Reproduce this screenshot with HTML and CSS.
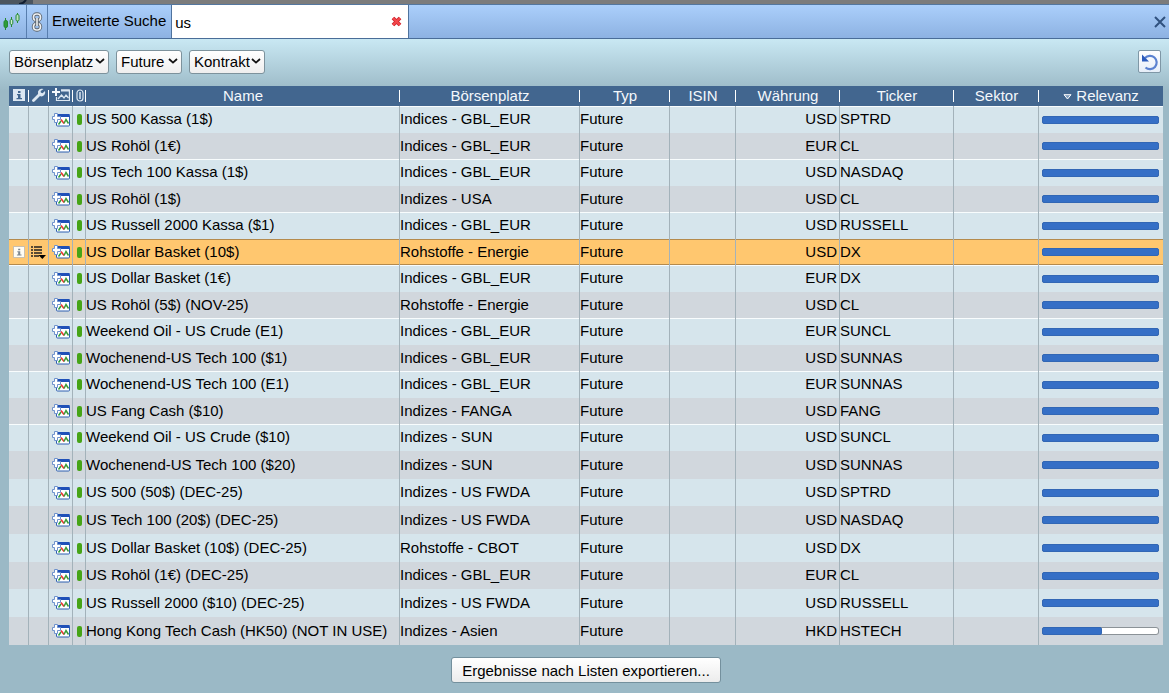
FILE: index.html
```
<!DOCTYPE html>
<html lang="de">
<head>
  <meta charset="UTF-8">
  <meta name="viewport" content="width=device-width, initial-scale=1.0">
  <title>Erweiterte Suche</title>
  <link rel="stylesheet" href="styles.css">
</head>
<body>
  <svg class="sprite" aria-hidden="true">
    <symbol id="icon-chevron" viewBox="0 0 10 6">
      <path d="M1 1l4 3.6L9 1" fill="none" stroke="#111" stroke-width="1.8"/>
    </symbol>
    <symbol id="icon-chart" viewBox="0 0 18 14">
      <rect x="4.500" y="1.500" width="13" height="11.500" rx="1" fill="#fff" stroke="#2d5fb0"/>
      <path d="M5 1h12.500v3H5z" fill="#1f50b8"/>
      <path d="M6.500 11.500L9 8" stroke="#2f9e3a" stroke-width="1.500"/>
      <path d="M9 6.500l3 4" stroke="#e33" stroke-width="1.500"/>
      <path d="M12 10.500l2-4 2.500 4" fill="none" stroke="#3c9a35" stroke-width="1.500"/>
      <path d="M2.500.500h3v3h3v3h-3v3h-3v-3h-2v-3h2z" fill="#fff" stroke="#6f92cc"/>
    </symbol>
    <symbol id="icon-chart-light" viewBox="0 0 18 14">
      <path d="M9 2h8.400v10.500H4.500V9" fill="none" stroke="#dce7f2" stroke-width="1.200"/>
      <path d="M9 1.500h8.500v2H9z" fill="#dce7f2"/>
      <path d="M6 11l3.500-4 2.500 3 2-3 2.500 3" fill="none" stroke="#dce7f2" stroke-width="1.300"/>
      <path d="M3 0h2v3h3v2H5v3H3V5H0V3h3z" fill="#f4f8fc"/>
    </symbol>
    <symbol id="icon-info" viewBox="0 0 12 12">
      <path d="M5 2h2.500v2H5zM4 5h3.500v4H9v1.300H3.500V9H5V6.200H4z"/>
    </symbol>
    <symbol id="icon-list" viewBox="0 0 15 13">
      <path d="M0 1h2M0 4h2M0 7h2M0 10h2M3 1h8M3 4h8M3 7h8M3 10h5" stroke="#222" stroke-width="1.500"/>
      <path d="M7.500 9H15l-3.700 4z" fill="#000"/>
    </symbol>
  </svg>

  <div class="backdrop">
    <svg width="33" height="4" viewBox="0 0 33 4" aria-hidden="true">
      <path d="M0 0h33v4H0z" fill="#4c5660"/>
      <path d="M19 4q4 0 7-4" fill="none" stroke="#111e30" stroke-width="2"/>
    </svg>
  </div>

  <header class="search-bar">
    <button class="bar-button candles" aria-label="Chart">
      <svg width="17" height="20" viewBox="0 0 17 20">
        <g stroke="#258a32" fill="#2f9c3b">
          <path d="M2.500 6v12M8.500 5v10M14.500 1v10"/>
          <rect x="1" y="8.500" width="3.500" height="7" rx="1.500"/>
          <rect x="7.200" y="7.500" width="2.600" height="5" rx="1.200" fill="#d0ecd4"/>
          <rect x="13" y="2.500" width="3" height="6.500" rx="1.300" fill="#b9e0c0"/>
        </g>
      </svg>
    </button>
    <button class="bar-button link" aria-label="Verknüpfung">
      <svg width="12" height="20" viewBox="0 0 12 20" fill="none">
        <g stroke="#5f6770" stroke-width="3.400">
          <rect x="2.500" y="2" width="7" height="6.500" rx="3"/>
          <rect x="2.500" y="11.500" width="7" height="6.500" rx="3"/>
        </g>
        <g stroke="#edf0f2" stroke-width="1.600">
          <rect x="2.500" y="2" width="7" height="6.500" rx="3"/>
          <rect x="2.500" y="11.500" width="7" height="6.500" rx="3"/>
        </g>
        <path d="M6 6v8" stroke="#5f6770" stroke-width="3.600"/>
        <path d="M6 6v8" stroke="#edf0f2" stroke-width="1.600"/>
      </svg>
    </button>
    <label class="search-label" for="search">Erweiterte Suche</label>
    <div class="search-field">
      <input type="text" id="search" value="us" autocomplete="off" autofocus>
      <button class="clear" aria-label="Suche leeren">
        <svg width="11" height="11" viewBox="0 0 11 11">
          <path d="M2 2l7 7M9 2l-7 7" stroke="#c9252d" stroke-width="3.800"/>
          <path d="M2 2l7 7M9 2l-7 7" stroke="#f4464b" stroke-width="2.200"/>
        </svg>
      </button>
    </div>
    <button class="close" aria-label="Schließen">
      <svg width="12" height="12" viewBox="0 0 12 12">
        <path d="M1 1l10 10M11 1L1 11" stroke="#31527f" stroke-width="2"/>
      </svg>
    </button>
  </header>

  <main>
    <div class="filters">
      <div class="select">
        <select aria-label="Börsenplatz"><option>Börsenplatz</option></select>
        <svg width="10" height="6"><use href="#icon-chevron"/></svg>
      </div>
      <div class="select">
        <select class="wide" aria-label="Typ"><option>Future</option></select>
        <svg width="10" height="6"><use href="#icon-chevron"/></svg>
      </div>
      <div class="select">
        <select aria-label="Kontrakt"><option>Kontrakt</option></select>
        <svg width="10" height="6"><use href="#icon-chevron"/></svg>
      </div>
      <button class="reset" aria-label="Zurücksetzen">
        <svg width="18" height="18" viewBox="0 0 18 18">
          <path d="M4 5A6.700 6.700 0 1 1 4.500 14.500" fill="none" stroke="#5b82d0" stroke-width="2.200"/>
          <path d="M1 1.500v7h7z" fill="#2c5cbc"/>
        </svg>
      </button>
    </div>

    <table class="results">
      <colgroup>
        <col class="col-icon"><col class="col-icon"><col class="col-chart"><col class="col-status">
        <col class="col-name"><col class="col-market"><col class="col-type"><col class="col-isin">
        <col class="col-currency"><col class="col-ticker"><col class="col-sector"><col class="col-relevance">
      </colgroup>
      <thead>
        <tr>
          <th aria-label="Info"><svg class="info-head" width="12" height="12"><use href="#icon-info"/></svg></th>
          <th aria-label="Aktionen">
            <svg width="14" height="14" viewBox="0 0 14 14">
              <path d="M1.500 12.500L8 6" stroke="#dce7f2" stroke-width="2.800" stroke-linecap="round"/>
              <path d="M11.500 1A4 4 0 0 0 6 5.500 3.600 3.600 0 0 0 8.500 8.300 4 4 0 0 0 13 3l-2.500 2.300L8.700 4.600V3z" fill="#dce7f2"/>
            </svg>
          </th>
          <th aria-label="Chart"><svg width="18" height="14"><use href="#icon-chart-light"/></svg></th>
          <th aria-label="Status">
            <svg width="8" height="13" viewBox="0 0 8 13">
              <rect x="1" y="1" width="6" height="11" rx="3" fill="none" stroke="#dce7f2" stroke-width="1.200"/>
              <path d="M4 3v7" stroke="#dce7f2" stroke-width="1.500"/>
            </svg>
          </th>
          <th>Name</th>
          <th>Börsenplatz</th>
          <th>Typ</th>
          <th>ISIN</th>
          <th>Währung</th>
          <th>Ticker</th>
          <th>Sektor</th>
          <th aria-sort="descending">
            <svg class="sort" width="9" height="6" viewBox="0 0 9 6"><path d="M1 .700h7L4.500 5z" fill="#7f9cbd" stroke="#fff"/></svg>
            Relevanz
          </th>
        </tr>
      </thead>
      <tbody id="rows"></tbody>
    </table>

    <div class="footer">
      <button class="export">Ergebnisse nach Listen exportieren...</button>
    </div>
  </main>

  <script>
    // name, market, currency, ticker, relevance in percent
    const results = [
      ['US 500 Kassa (1$)', 'Indices - GBL_EUR', 'USD', 'SPTRD', 100],
      ['US Rohöl (1€)', 'Indices - GBL_EUR', 'EUR', 'CL', 100],
      ['US Tech 100 Kassa (1$)', 'Indices - GBL_EUR', 'USD', 'NASDAQ', 100],
      ['US Rohöl (1$)', 'Indizes - USA', 'USD', 'CL', 100],
      ['US Russell 2000 Kassa ($1)', 'Indices - GBL_EUR', 'USD', 'RUSSELL', 100],
      ['US Dollar Basket (10$)', 'Rohstoffe - Energie', 'USD', 'DX', 100],
      ['US Dollar Basket (1€)', 'Indices - GBL_EUR', 'EUR', 'DX', 100],
      ['US Rohöl (5$) (NOV-25)', 'Rohstoffe - Energie', 'USD', 'CL', 100],
      ['Weekend Oil - US Crude (E1)', 'Indices - GBL_EUR', 'EUR', 'SUNCL', 100],
      ['Wochenend-US Tech 100 ($1)', 'Indices - GBL_EUR', 'USD', 'SUNNAS', 100],
      ['Wochenend-US Tech 100 (E1)', 'Indices - GBL_EUR', 'EUR', 'SUNNAS', 100],
      ['US Fang Cash ($10)', 'Indizes - FANGA', 'USD', 'FANG', 100],
      ['Weekend Oil - US Crude ($10)', 'Indizes - SUN', 'USD', 'SUNCL', 100],
      ['Wochenend-US Tech 100 ($20)', 'Indizes - SUN', 'USD', 'SUNNAS', 100],
      ['US 500 (50$) (DEC-25)', 'Indizes - US FWDA', 'USD', 'SPTRD', 100],
      ['US Tech 100 (20$) (DEC-25)', 'Indizes - US FWDA', 'USD', 'NASDAQ', 100],
      ['US Dollar Basket (10$) (DEC-25)', 'Rohstoffe - CBOT', 'USD', 'DX', 100],
      ['US Rohöl (1€) (DEC-25)', 'Indices - GBL_EUR', 'EUR', 'CL', 100],
      ['US Russell 2000 ($10) (DEC-25)', 'Indizes - US FWDA', 'USD', 'RUSSELL', 100],
      ['Hong Kong Tech Cash (HK50) (NOT IN USE)', 'Indizes - Asien', 'HKD', 'HSTECH', 51]
    ];
    const selected = 5;

    const infoIcon = '<svg class="info" width="12" height="12"><use href="#icon-info"/></svg>';
    const listIcon = '<svg width="15" height="13"><use href="#icon-list"/></svg>';

    document.getElementById('rows').innerHTML = results.map((r, i) => `
      <tr${i === selected ? ' class="selected"' : ''}>
        <td class="icon">${i === selected ? infoIcon : ''}</td>
        <td class="icon">${i === selected ? listIcon : ''}</td>
        <td class="icon"><svg width="18" height="14"><use href="#icon-chart"/></svg></td>
        <td class="icon"><span class="status"></span></td>
        <td>${r[0]}</td>
        <td>${r[1]}</td>
        <td>Future</td>
        <td></td>
        <td class="currency">${r[2]}</td>
        <td>${r[3]}</td>
        <td></td>
        <td class="relevance"><div class="bar"><div class="fill" style="width: ${r[4]}%"></div></div></td>
      </tr>`).join('');

    // put the caret behind the search term
    const search = document.getElementById('search');
    search.focus();
    search.setSelectionRange(search.value.length, search.value.length);
  </script>
</body>
</html>
```
FILE: styles.css
```
* {
  box-sizing: border-box;
}

body {
  margin: 0;
  min-height: 100vh;
  display: flex;
  flex-direction: column;
  background: #9bb9c6;
  color: #000;
  font-family: "Liberation Sans", Arial, sans-serif;
  font-size: 15px;
}

button,
input,
select {
  font: inherit;
  color: inherit;
  margin: 0;
}

svg {
  display: block;
}

.sprite {
  position: absolute;
  width: 0;
  height: 0;
}

.backdrop {
  height: 4px;
  background: #7c7c7c;
}

/* search bar */
.search-bar {
  display: flex;
  height: 35px;
  border-top: 1px solid #54779f;
  border-bottom: 1px solid #4a6d98;
  background: linear-gradient(#abcffb, #8db2e2);
}

.bar-button {
  display: flex;
  align-items: center;
  justify-content: center;
  padding: 0;
  border: none;
  border-right: 1px solid #587eae;
  background: none;
}

.candles {
  width: 27px;
  padding-right: 3px;
}

.link {
  width: 21px;
}

.search-label {
  display: flex;
  align-items: center;
  padding: 0 5px 2px 4px;
}

.search-field {
  display: flex;
  align-items: center;
  width: 238px;
  border: solid #4f739e;
  border-width: 0 1px;
  background: #fff;
}

.search-field input {
  flex: 1;
  min-width: 0;
  height: 100%;
  padding: 2px 3px 0;
  border: none;
  outline: none;
  background: none;
}

.clear {
  padding: 0 6px;
  border: none;
  background: none;
}

.close {
  margin-left: auto;
  padding: 0 3px;
  border: none;
  background: none;
}

/* filters */
main {
  flex: 1;
  padding: 0 6px 0 9px;
  background: linear-gradient(#c9e8f3, #9bb9c6 52px);
}

.filters {
  display: flex;
  gap: 7px;
  padding: 11px 0 12px;
}

.select {
  position: relative;
}

.select select {
  appearance: none;
  height: 24px;
  padding: 0 14px 1px 4px;
  border: 1px solid #7d929c;
  border-radius: 3px;
  background: linear-gradient(#fff, #eee);
}

.select .wide {
  padding-right: 16px;
}

.select svg {
  position: absolute;
  top: 8px;
  right: 4px;
  pointer-events: none;
}

.reset {
  display: flex;
  align-items: center;
  justify-content: center;
  width: 23px;
  height: 23px;
  margin-left: auto;
  margin-right: 2px;
  padding: 0;
  border: 1px solid #7f97a6;
  border-radius: 2px;
  background: linear-gradient(#fff, #e6eef8);
}

/* result table */
.results {
  width: 100%;
  table-layout: fixed;
  border-collapse: separate;
  border-spacing: 0;
  white-space: nowrap;
}

.col-icon { width: 20px; }
.col-chart { width: 24px; }
.col-status { width: 13px; }
.col-market { width: 180px; }
.col-type { width: 90px; }
.col-isin { width: 66px; }
.col-currency { width: 104px; }
.col-ticker { width: 114px; }
.col-sector { width: 85px; }
.col-relevance { width: 124px; }

th {
  height: 20px;
  padding: 0 0 2px;
  background: linear-gradient(#fff, #fff) right center / 1px 12px no-repeat #42668f;
  color: #f4f8fc;
  font-weight: normal;
}

th:last-child {
  background: #42668f;
}

th svg {
  margin: 0 auto;
}

.sort {
  display: inline-block;
  vertical-align: 1px;
}

.info-head {
  background: #dce7f2;
  fill: #42668f;
}

td {
  height: 26px;
  padding: 0 0 2px;
  border-right: 1px solid #a3b2ba;
  overflow: hidden;
}

td:last-child {
  border-right: none;
}

tbody tr {
  background: #d1d7dd;
}

tbody tr:nth-child(odd) {
  background: linear-gradient(#f8fcfd 1px, #d6e5ec 1px);
}

tbody tr:nth-child(odd) td {
  height: 27px;
}

tbody tr:nth-child(n+14) td {
  height: 28px;
}

tbody tr:nth-child(15) td,
tbody tr:nth-child(18) td {
  height: 27px;
}

tbody tr:nth-child(n+14):nth-child(odd) {
  background: #d6e5ec;
}

tbody .selected {
  background: #ffc76f;
  box-shadow: inset 0 1px #b58a4c, inset 0 -1px #b58a4c;
}

td.icon {
  padding: 0;
}

.icon svg,
.status {
  display: block;
  margin: 0 auto;
}

.icon .info {
  border: 1px solid #c9bfae;
  background: #fffdf5;
  fill: #7d8790;
}

.status {
  width: 5px;
  height: 11px;
  border-radius: 2px;
  background: #46a416;
}

td.currency {
  padding-right: 2px;
  text-align: right;
}

td.relevance {
  padding: 0 4px 0 3px;
}

.bar {
  height: 8px;
  border-radius: 3px;
  background: #fff;
  box-shadow: inset 0 0 0 1px #8b9297;
}

.fill {
  height: 8px;
  border: 1px solid #3267b5;
  border-radius: 2px;
  background: #356fc6;
}

/* footer */
.footer {
  display: flex;
  justify-content: center;
  padding: 12px 0 10px;
}

.export {
  height: 26px;
  padding: 0 10px;
  border: 1px solid #74909d;
  border-radius: 3px;
  background: linear-gradient(#fff, #ececec);
}
```
